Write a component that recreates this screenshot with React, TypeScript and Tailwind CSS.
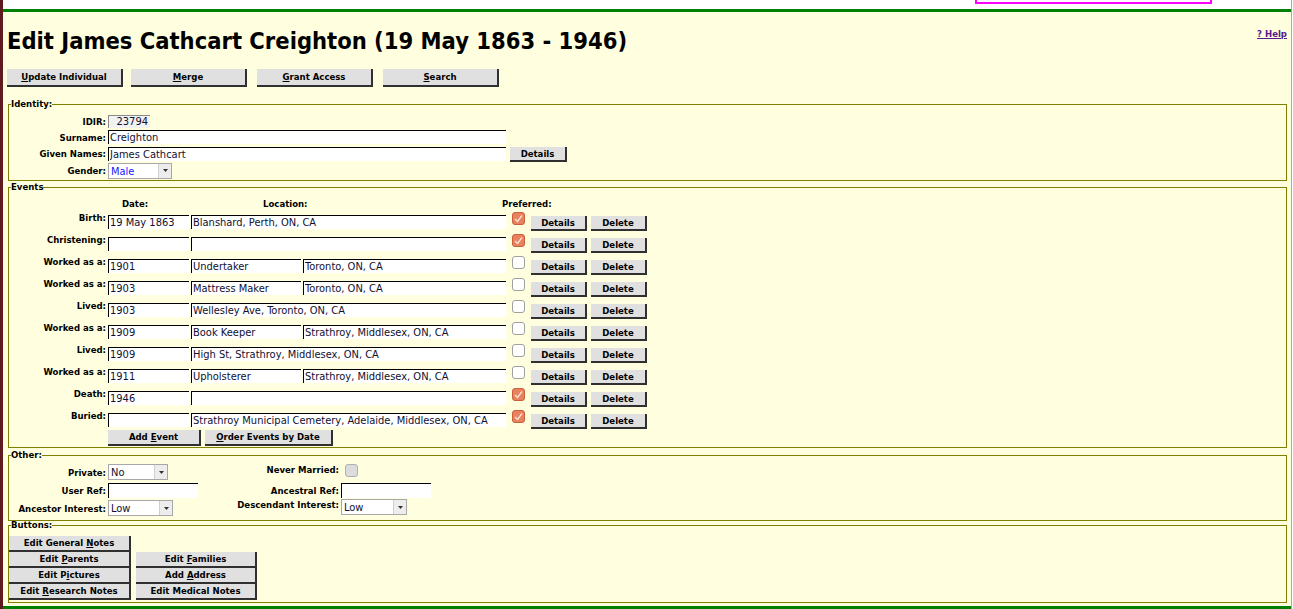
import React from 'react';

const F = "font-['DejaVu_Sans_Condensed','DejaVu_Sans',sans-serif] [font-stretch:condensed]";

type Ev = { label: string; date: string; occ?: string; loc: string; pref?: boolean };

const events: Ev[] = [
  { label: 'Birth:', date: '19 May 1863', loc: 'Blanshard, Perth, ON, CA', pref: true },
  { label: 'Christening:', date: '', loc: '', pref: true },
  { label: 'Worked as a:', date: '1901', occ: 'Undertaker', loc: 'Toronto, ON, CA' },
  { label: 'Worked as a:', date: '1903', occ: 'Mattress Maker', loc: 'Toronto, ON, CA' },
  { label: 'Lived:', date: '1903', loc: 'Wellesley Ave, Toronto, ON, CA' },
  { label: 'Worked as a:', date: '1909', occ: 'Book Keeper', loc: 'Strathroy, Middlesex, ON, CA' },
  { label: 'Lived:', date: '1909', loc: 'High St, Strathroy, Middlesex, ON, CA' },
  { label: 'Worked as a:', date: '1911', occ: 'Upholsterer', loc: 'Strathroy, Middlesex, ON, CA' },
  { label: 'Death:', date: '1946', loc: '', pref: true },
  { label: 'Buried:', date: '', loc: 'Strathroy Municipal Cemetery, Adelaide, Middlesex, ON, CA', pref: true },
];

function Btn({ children, className = '' }: { children: React.ReactNode; className?: string }) {
  return (
    <button
      type="button"
      className={`shrink-0 bg-[#e0e0e0] border-r-2 border-b-2 border-[#303030] text-[9.5px] font-bold leading-none text-black flex items-center justify-center ${className}`}
    >
      {children}
    </button>
  );
}

function Field({ value, className = '' }: { value: string; className?: string }) {
  return (
    <input
      readOnly
      defaultValue={value}
      className={`h-[14px] bg-white border-t border-l border-black pl-[1px] text-[11px] leading-[13px] text-[#101030] outline-none ${className}`}
    />
  );
}

function Check({ on, disabled = false }: { on?: boolean; disabled?: boolean }) {
  if (disabled) {
    return <span className="block w-[13px] h-[13px] rounded-[3px] bg-[#dcdcdc] border border-[#b0b0b0]" />;
  }
  if (on) {
    return (
      <span className="flex w-[13px] h-[13px] rounded-[3px] bg-[#e8825e] border border-[#c8603c] items-center justify-center">
        <svg width="9" height="8" viewBox="0 0 9 8">
          <polyline points="1,4 3.5,6.5 8,0.5" fill="none" stroke="#fbe3d8" strokeWidth="1.4" />
        </svg>
      </span>
    );
  }
  return <span className="block w-[13px] h-[13px] rounded-[3px] bg-white border border-[#a0a0a0]" />;
}

function Select({ value, className = '', blue = false }: { value: string; className?: string; blue?: boolean }) {
  return (
    <div className={`flex h-[16px] bg-white border border-[#a8a8a8] ${className}`}>
      <span className={`flex-1 pl-[2px] text-[11px] leading-[15px] ${blue ? 'text-[#2020ff]' : 'text-[#101030]'}`}>{value}</span>
      <span className="w-[13px] bg-[#ededed] border-l border-[#d0d0d0] flex items-center justify-center">
        <svg width="5" height="3" viewBox="0 0 5 3">
          <polygon points="0,0 5,0 2.5,3" fill="#333" />
        </svg>
      </span>
    </div>
  );
}

function Label({ children, className = '' }: { children: React.ReactNode; className?: string }) {
  return <span className={`text-right text-[9.5px] font-bold leading-[11px] whitespace-nowrap text-black ${className}`}>{children}</span>;
}

function Box({ title, children, className = '' }: { title: string; children: React.ReactNode; className?: string }) {
  return (
    <fieldset className={`ml-[1px] border border-[#808000] ${className}`}>
      <legend className="ml-[2px] text-[9.5px] font-bold leading-[12px] text-black">{title}</legend>
      {children}
    </fieldset>
  );
}

export default function App() {
  return (
    <div className={`flex w-full bg-white ${F}`}>
      <div className="w-[3px] shrink-0 bg-[#5e1a1f]" />
      <div className="flex-1 flex flex-col min-w-0">
        <div className="h-[9px] bg-white">
          <div className="ml-[972px] w-[237px] h-[4px] border-l-2 border-r-2 border-b-2 border-[#ff00ff]" />
        </div>
        <div className="h-[3px] bg-[#008000]" />
        <main className="bg-[#ffffe0] pl-[4px] pr-[4px] pt-[15px] pb-[3px]">
          <div className="flex items-start justify-between">
            <h1 className="text-[23.5px] leading-[28px] font-bold text-black">Edit James Cathcart Creighton (19 May 1863 - 1946)</h1>
            <a href="#" className="mt-[1px] text-[9.5px] font-bold leading-[12px] text-[#551a8b] underline">? Help</a>
          </div>

          <div className="flex mt-[14px]">
            <Btn className="w-[116px] h-[18px]"><span><u>U</u>pdate Individual</span></Btn>
            <Btn className="ml-[8px] w-[116px] h-[18px]"><span><u>M</u>erge</span></Btn>
            <Btn className="ml-[10px] w-[116px] h-[18px]"><span><u>G</u>rant Access</span></Btn>
            <Btn className="ml-[10px] w-[116px] h-[18px]"><span><u>S</u>earch</span></Btn>
          </div>

          <Box title="Identity:" className="mt-[11px] pb-[1px]">
            <div className="pt-[3px] flex flex-col">
              <div className="flex items-center h-[16px]">
                <Label className="w-[97px]">IDIR:</Label>
                <input
                  readOnly
                  defaultValue="23794"
                  className="ml-[2px] w-[42px] h-[13px] bg-[#f2f2f0] border-t border-l border-[#8a8a8a] pr-[2px] text-right text-[11px] leading-[12px] text-[#101030] outline-none"
                />
              </div>
              <div className="flex items-center h-[16px]">
                <Label className="w-[97px]">Surname:</Label>
                <Field value="Creighton" className="ml-[2px] w-[398px]" />
              </div>
              <div className="flex items-center h-[17px]">
                <Label className="w-[97px]">Given Names:</Label>
                <Field value="James Cathcart" className="ml-[2px] w-[398px]" />
                <Btn className="ml-[4px] mt-[2px] w-[57px] h-[15px]">Details</Btn>
              </div>
              <div className="flex items-center h-[17px]">
                <Label className="w-[97px]">Gender:</Label>
                <Select value="Male" blue className="ml-[2px] w-[64px] h-[15px]" />
              </div>
            </div>
          </Box>

          <Box title="Events" className="mt-[0px] pb-[1px]">
            <div className="pt-[5px]">
              <div className="flex h-[12px] text-[9.5px] font-bold leading-[12px] text-black">
                <span className="w-[113px]" />
                <span className="w-[141px]">Date:</span>
                <span className="w-[239px]">Location:</span>
                <span>Preferred:</span>
              </div>
              <div className="mt-[2px] flex flex-col gap-[3px]">
                {events.map((e, i) => (
                  <div key={i} className="flex h-[19px]">
                    <Label className="w-[97px]">{e.label}</Label>
                    <div className="ml-[2px] mt-[3px] flex gap-[2px]">
                      <Field value={e.date} className="w-[81px]" />
                      {e.occ !== undefined ? (
                        <>
                          <Field value={e.occ} className="w-[110px]" />
                          <Field value={e.loc} className="w-[203px]" />
                        </>
                      ) : (
                        <Field value={e.loc} className="w-[315px]" />
                      )}
                    </div>
                    <div className="ml-[6px] mt-[0px]">
                      <Check on={e.pref} />
                    </div>
                    <Btn className="ml-[6px] mt-[4px] w-[56px] h-[15px]">Details</Btn>
                    <Btn className="ml-[4px] mt-[4px] w-[56px] h-[15px]">Delete</Btn>
                  </div>
                ))}
              </div>
              <div className="flex mt-[1px] ml-[99px]">
                <Btn className="w-[93px] h-[16px]"><span>Add <u>E</u>vent</span></Btn>
                <Btn className="ml-[4px] w-[128px] h-[16px]"><span><u>O</u>rder Events by Date</span></Btn>
              </div>
            </div>
          </Box>

          <Box title="Other:" className="mt-[1px] pb-[3px]">
            <div className="pt-[2px] grid grid-cols-[97px_125px_104px_auto] gap-x-[2px] auto-rows-[18px] items-center">
              <Label>Private:</Label>
              <Select value="No" className="w-[60px]" />
              <Label className="self-start pt-[1px]">Never Married:</Label>
              <div className="ml-[4px] self-start pt-[1px]"><Check disabled /></div>

              <Label>User Ref:</Label>
              <Field value="" className="w-[90px] h-[15px]" />
              <Label>Ancestral Ref:</Label>
              <Field value="" className="w-[90px] h-[15px]" />

              <Label>Ancestor Interest:</Label>
              <Select value="Low" className="w-[65px]" />
              <Label className="self-start">Descendant Interest:</Label>
              <Select value="Low" className="w-[66px] self-start" />
            </div>
          </Box>

          <Box title="Buttons:" className="-mt-[2px] pb-[2px]">
            <div className="pt-[5px] grid grid-cols-[122px_121px] gap-x-[5px] auto-rows-[16px]">
              <Btn className="h-[16px]"><span>Edit General <u>N</u>otes</span></Btn>
              <span />
              <Btn className="h-[16px]"><span>Edit <u>P</u>arents</span></Btn>
              <Btn className="h-[16px]"><span>Edit <u>F</u>amilies</span></Btn>
              <Btn className="h-[16px]"><span>Edit P<u>i</u>ctures</span></Btn>
              <Btn className="h-[16px]"><span>Add <u>A</u>ddress</span></Btn>
              <Btn className="h-[16px]"><span>Edit <u>R</u>esearch Notes</span></Btn>
              <Btn className="h-[16px]"><span>Edit Medical Notes</span></Btn>
            </div>
          </Box>
        </main>
        <div className="h-[3px] bg-[#008000]" />
        <div className="h-[1px] bg-white" />
      </div>
      <div className="w-[1px] shrink-0 bg-[#a8a8a8]" />
      <div className="w-[1px] shrink-0 bg-white" />
    </div>
  );
}
